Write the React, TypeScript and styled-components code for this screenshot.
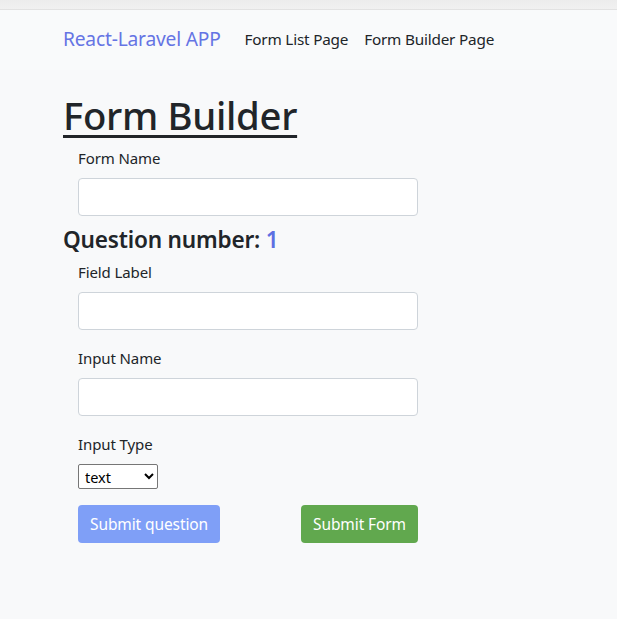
import React, { useState } from "react";
import styled, { createGlobalStyle } from "styled-components";

const GlobalStyle = createGlobalStyle`
  html, body {
    margin: 0;
    padding: 0;
    background: #f8f9fa;
    font-family: "Noto Sans", "Open Sans", sans-serif;
    color: #212529;
  }
`;

const Page = styled.div`
  min-height: 619px;
  background: #f8f9fa;
`;

const TopStrip = styled.div`
  height: 9px;
  background: linear-gradient(#ececec, #f1f1f1);
  border-bottom: 1px solid #e2e2e2;
`;

const NavBar = styled.nav`
  box-sizing: border-box;
  display: flex;
  align-items: center;
  gap: 24px;
  height: 60px;
  padding: 0 63px 3px;
  background: #f9fafb;
`;

const Brand = styled.a`
  font-size: 19.2px;
  color: #6574e4;
  text-decoration: none;
  letter-spacing: -0.2px;
`;

const NavLinks = styled.div`
  display: flex;
  gap: 16px;
`;

const NavLink = styled.a`
  font-size: 15.3px;
  color: #212529;
  text-decoration: none;
  letter-spacing: -0.2px;
`;

const Main = styled.main`
  padding: 22px 63px 0;
`;

const Title = styled.h1`
  margin: 0 0 9px;
  font-size: 38.3px;
  font-weight: 500;
  line-height: 46px;
  text-decoration: underline;
  text-decoration-thickness: 3px;
  text-underline-offset: 5px;
  letter-spacing: -0.3px;
`;

const Group = styled.div<{ $gap?: number }>`
  display: flex;
  flex-direction: column;
  align-items: flex-start;
  padding-left: 15px;
  margin-bottom: ${({ $gap }) => $gap ?? 0}px;
`;

const Label = styled.label`
  font-size: 15px;
  line-height: 22px;
  margin-bottom: 9px;
  letter-spacing: -0.1px;
`;

const TextInput = styled.input`
  box-sizing: border-box;
  width: 340px;
  height: 38px;
  border: 1px solid #ced4da;
  border-radius: 4px;
  background: #fff;
  padding: 6px 12px;
  font-size: 16px;
  font-family: inherit;
`;

const Question = styled.h3`
  margin: 10px 0 7px;
  font-size: 22.6px;
  font-weight: 600;
  line-height: 28px;
  letter-spacing: -0.2px;
`;

const Num = styled.span`
  color: #5d6fe2;
`;

const Select = styled.select`
  box-sizing: border-box;
  width: 80px;
  height: 25px;
  font-size: 14.5px;
  font-family: inherit;
  border: 1px solid #767676;
  border-radius: 2px;
  background: #fff;
  color: #000;
  padding: 0 2px;
`;

const Actions = styled.div`
  display: flex;
  justify-content: space-between;
  width: 340px;
  margin: 16px 0 0 15px;
`;

const Button = styled.button<{ $variant: "primary" | "success" }>`
  height: 38px;
  padding: 0 12px;
  border: none;
  border-radius: 4px;
  font-size: 15.5px;
  font-family: inherit;
  color: #fff;
  letter-spacing: -0.1px;
  background: ${({ $variant }) => ($variant === "primary" ? "#7f9ff7" : "#61a84e")};
  cursor: pointer;
`;

export default function App() {
  const [type, setType] = useState("text");
  return (
    <Page>
      <GlobalStyle />
      <TopStrip />
      <NavBar>
        <Brand href="#">React-Laravel APP</Brand>
        <NavLinks>
          <NavLink href="#">Form List Page</NavLink>
          <NavLink href="#">Form Builder Page</NavLink>
        </NavLinks>
      </NavBar>
      <Main>
        <Title>Form Builder</Title>
        <Group>
          <Label>Form Name</Label>
          <TextInput type="text" />
        </Group>
        <Question>
          Question number: <Num>1</Num>
        </Question>
        <Group $gap={17}>
          <Label>Field Label</Label>
          <TextInput type="text" />
        </Group>
        <Group $gap={17}>
          <Label>Input Name</Label>
          <TextInput type="text" />
        </Group>
        <Group>
          <Label>Input Type</Label>
          <Select value={type} onChange={(e) => setType(e.target.value)}>
            <option value="text">text</option>
            <option value="number">number</option>
            <option value="email">email</option>
          </Select>
        </Group>
        <Actions>
          <Button $variant="primary">Submit question</Button>
          <Button $variant="success">Submit Form</Button>
        </Actions>
      </Main>
    </Page>
  );
}
